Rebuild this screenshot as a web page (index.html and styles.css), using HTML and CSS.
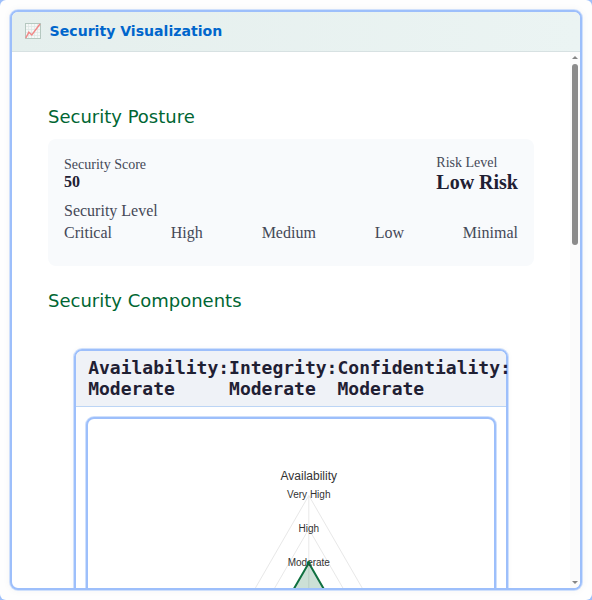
FILE: index.html
```html
<!DOCTYPE html>
<html lang="en">
<head>
<meta charset="utf-8">
<title>Security Visualization</title>
<link rel="stylesheet" href="styles.css">
</head>
<body>
<main class="page">
  <section class="widget">
    <header class="widget-header">
      <svg class="widget-icon" viewBox="0 0 16 16" aria-hidden="true">
        <rect x=".5" y=".5" width="15" height="15" fill="#f5f8f7" stroke="#b5c8c0"/>
        <path d="M3.5 1v14M6.5 1v14M9.5 1v14M12.5 1v14M1 3.5h14M1 6.5h14M1 9.5h14M1 12.5h14" stroke="#dce6e4" stroke-width=".7"/>
        <path d="M.8 15L3.8 9.3 6.8 12 15 1" fill="none" stroke="#f08888" stroke-width="1.5"/>
      </svg>
      <h2 class="widget-title">Security Visualization</h2>
    </header>
    <div class="widget-body">
      <div class="content">
        <h3 class="heading">Security Posture</h3>
        <div class="posture">
          <div class="summary">
            <div><div class="label">Security Score</div><div class="score">50</div></div>
            <div><div class="label">Risk Level</div><div class="risk">Low Risk</div></div>
          </div>
          <div class="level">Security Level</div>
          <div class="scale"><span>Critical</span><span>High</span><span>Medium</span><span>Low</span><span>Minimal</span></div>
        </div>
        <h3 class="heading">Security Components</h3>
        <div class="radar">
          <div class="radar-header">
            <div>Availability:<br>Moderate</div><div>Integrity:<br>Moderate</div><div>Confidentiality:<br>Moderate</div>
          </div>
          <div class="chart">
            <svg width="406" height="300" viewBox="88 419 406 300">
              <g fill="none" stroke="#e8e8e8">
                <path d="M308.8 495.5L207.8 670.5H409.8Z"/>
                <path d="M308.8 529L227 670.5H390.6Z"/>
                <path d="M308.8 495.5V630"/>
              </g>
              <path d="M308.8 563L266 637H351.6Z" fill="#006633" fill-opacity=".2" stroke="#0f7040" stroke-width="2"/>
              <g class="chart-text" text-anchor="middle">
                <text class="axis" x="308.8" y="480.4">Availability</text>
                <text x="308.8" y="498.3">Very High</text>
                <text x="308.8" y="532">High</text>
                <text x="308.8" y="565.5">Moderate</text>
              </g>
              <circle cx="308.8" cy="563" r="2" fill="#0f6b3c"/>
            </svg>
          </div>
        </div>
      </div>
      <div class="scrollbar">
        <svg width="6" height="3" viewBox="0 0 6 3"><path d="M0 3L3 0 6 3Z" fill="#858585"/></svg>
        <div class="thumb"></div>
        <svg class="down" width="6" height="3" viewBox="0 0 6 3"><path d="M0 0L3 3 6 0Z" fill="#858585"/></svg>
      </div>
    </div>
  </section>
</main>
</body>
</html>
```
FILE: styles.css
```css
* { box-sizing: border-box; }
body { margin: 0; background: #9dbffb; font-family: "Liberation Serif", serif; font-size: 16px; color: #444857; }
.page { height: 600px; padding: 10px; background: #fefefe; border-radius: 6px; overflow: hidden; }
.widget { width: 572px; height: 580px; border: 2px solid #9dbffb; border-radius: 8px; box-shadow: 0 0 0 1px #cfe0fc, 0 0 8px rgba(0,0,0,.05); display: flex; flex-direction: column; overflow: hidden; background: #fff; }
.widget-header { height: 40px; flex: none; display: flex; align-items: center; gap: 8.6px; padding: 0 13px 1px; background: linear-gradient(90deg, #e5efed, #ebf4f3); border-bottom: 1px solid #d7e1e2; }
.widget-icon { width: 16px; height: 16px; }
.widget-title { margin: 0; font: bold 14.08px/20px "DejaVu Sans", sans-serif; color: #0066cc; }
.widget-body { display: flex; flex: 1; min-height: 0; }
.content { flex: 1; padding: 54px 36px 0; overflow: hidden; }
.heading { margin: 0 0 12px; font: 18px/21px "DejaVu Sans", sans-serif; color: #006633; }
.posture { height: 126.5px; padding: 16px; background: #f8fafc; border-radius: 8px; margin-bottom: 24.5px; }
.summary { display: flex; justify-content: space-between; align-items: center; height: 39px; }
.label { font-size: 14px; line-height: 16px; }
.score { font-weight: bold; line-height: 18px; padding-bottom: 2px; color: #1f2033; }
.risk { font-size: 20px; font-weight: bold; line-height: 23px; color: #1f2033; }
.level { margin-top: 8px; line-height: 18px; }
.scale { display: flex; justify-content: space-between; line-height: 18px; margin-top: 4px; }
.radar { width: 434px; height: 340px; margin: 38px 0 0 26px; border: 2px solid #9dbffb; border-radius: 8px; box-shadow: 0 0 0 1px #cfe0fc, 0 0 6px rgba(0,0,0,.04); }
.radar-header { height: 56px; display: flex; padding: 6px 12px 0 12.2px; background: #eff2f7; border-bottom: 1px solid #bcd5f5; border-radius: 6px 6px 0 0; font: bold 18px/21px "DejaVu Sans Mono", monospace; color: #1f2033; white-space: nowrap; }
.chart { width: 410px; height: 304px; margin: 10px 0 0 10px; border: 2px solid #9dbffb; border-radius: 8px; box-shadow: 0 0 0 1px #cfe0fc; background: #fff; overflow: hidden; }
.chart svg { display: block; }
.chart-text { font: 10px "Liberation Sans", sans-serif; fill: #333; }
.axis { font-size: 12px; }
.scrollbar { width: 10px; flex: none; padding: 4px 2px; background: #fbfbfb; display: flex; flex-direction: column; }
.scrollbar svg { display: block; flex: none; }
.thumb { height: 181px; margin-top: 5px; border-radius: 3px; background: #8b8b8b; flex: none; }
.down { margin-top: auto; }
```
